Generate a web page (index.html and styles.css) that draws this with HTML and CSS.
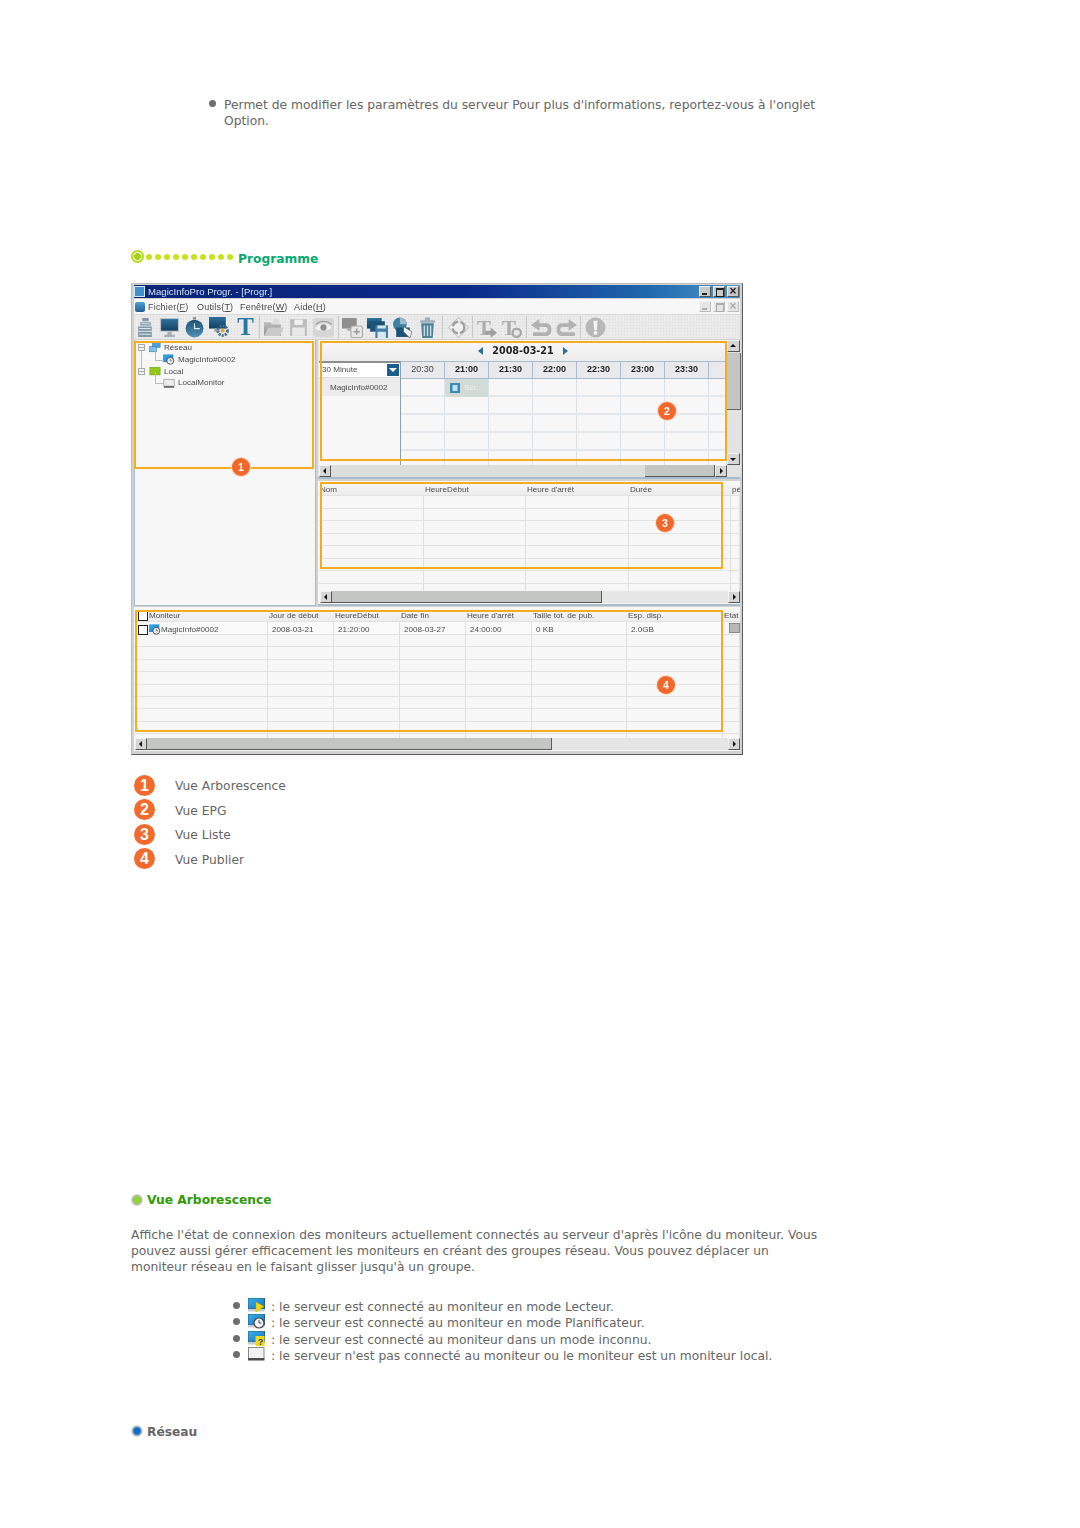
FILE: index.html
```html
<!DOCTYPE html>
<html lang="fr">
<head>
<meta charset="utf-8">
<title>Programme</title>
<link rel="stylesheet" href="styles.css">
</head>
<body>
<svg class="defs" width="0" height="0" aria-hidden="true">
  <defs>
    <linearGradient id="scr" x1="0" y1="0" x2="0" y2="1"><stop offset="0" stop-color="#2d6f9e"/><stop offset="1" stop-color="#14405f"/></linearGradient>
    <linearGradient id="gry" x1="0" y1="0" x2="0" y2="1"><stop offset="0" stop-color="#bdbdbd"/><stop offset="1" stop-color="#8d8d8d"/></linearGradient>
    <linearGradient id="sky" x1="0" y1="0" x2="1" y2="1"><stop offset="0" stop-color="#35b4ea"/><stop offset="1" stop-color="#1a6fc0"/></linearGradient>
    <linearGradient id="clk" x1="0" y1="0" x2="0" y2="1"><stop offset="0" stop-color="#1c4f72"/><stop offset="1" stop-color="#4f93b8"/></linearGradient>
    <symbol id="i-doc" viewBox="0 0 20 20"><path d="M7 1h6v3H7zM5 5h10v3H5zM3 9h13v4H3zM3 14h13v5H3z" fill="#7f99aa"/><path d="M6 6.500h8M4 11h11M4 16.500h11" stroke="#dde5ea"/></symbol>
    <symbol id="i-mon" viewBox="0 0 20 20"><rect x="1" y="1" width="18" height="13" fill="#b9c2c8"/><rect x="2" y="2" width="16" height="11" fill="url(#scr)"/><path d="M8 14h4v3H8zM5 17h10v2H5z" fill="#a4afb6"/></symbol>
    <symbol id="i-clk" viewBox="0 0 20 20"><circle cx="10" cy="11" r="8.500" fill="url(#clk)"/><path d="M8.500 0h3v2.500h-3z" fill="#8a97a0"/><path d="M10 6v5h5" stroke="#dfeaf0" stroke-width="1.100" fill="none"/></symbol>
    <symbol id="i-gear" viewBox="0 0 20 20"><rect x="0" y="0" width="16" height="11" fill="url(#scr)"/><path d="M5 11h5v3H5z" fill="#9aa5ad"/><circle cx="13" cy="13" r="4.600" fill="none" stroke="#3d6f8e" stroke-width="2.600" stroke-dasharray="2 1"/><circle cx="13" cy="13" r="2" fill="#e3a63c"/></symbol>
    <symbol id="i-fold" viewBox="0 0 20 20"><path d="M1 5h6l2 2h8v11H1z" fill="url(#gry)"/><path d="M5 10h15l-4 8H1z" fill="#cacaca"/><path d="M8 7l3-6 5 2-2 4z" fill="#dcdcdc"/></symbol>
    <symbol id="i-save" viewBox="0 0 20 20"><path d="M2 2h16v16H2z" fill="#bdbdbd"/><path d="M6 2.500h8v5H6z" fill="#f0f0f0"/><path d="M4 10h12v8H4z" fill="#e8e8e8"/></symbol>
    <symbol id="i-eye" viewBox="0 0 20 20"><rect x="0" y="1" width="20" height="18" rx="3" fill="#d6d6d6"/><path d="M2 11c3-6 12-6 16-1-4 4-12 4-16 1z" fill="#f4f4f4"/><circle cx="10" cy="10" r="3" fill="#8f8f8f"/><path d="M3 7c4-4 10-4 15 0" stroke="#9a9a9a" fill="none"/></symbol>
    <symbol id="i-add" viewBox="0 0 20 20"><rect x="0" y="1" width="14" height="10" fill="#8f8f8f"/><path d="M5 11h4v2H5z" fill="#aaa"/><rect x="8.500" y="8.500" width="11" height="11" rx="2" fill="#e6e6e6" stroke="#aaa"/><path d="M14 11v6M11 14h6" stroke="#999" stroke-width="1.400"/></symbol>
    <symbol id="i-msave" viewBox="0 0 20 20"><rect x="0" y="1" width="14" height="10" fill="url(#scr)"/><rect x="3" y="4" width="14" height="10" fill="#1d5379"/><rect x="8" y="8" width="12" height="12" fill="#3c7ea8"/><path d="M10 8h8v3h-8zM10 14h8v6h-8z" fill="#d8e6ee"/></symbol>
    <symbol id="i-pic" viewBox="0 0 20 20"><circle cx="7.500" cy="7" r="6.500" fill="#3f7f9f"/><path d="M7.500.5a6.500 6.500 0 0 1 6.500 6.500H7.500z" fill="#9bb9c9"/><rect x="4" y="10" width="13" height="9" fill="#1d5379"/><path d="M11 9l8 5-2 6-6-6z" fill="#f2f2f2" stroke="#555" stroke-width=".6"/></symbol>
    <symbol id="i-trash" viewBox="0 0 20 20"><path d="M4 6h12l-1 14H5z" fill="#4f7f98"/><path d="M7 8v10M10 8v10M13 8v10" stroke="#cfe0e8" stroke-width="1.300"/><path d="M3 3h14v2.500H3zM7.500 .5h5v3h-5z" fill="#9fb0ba"/></symbol>
    <symbol id="i-sync" viewBox="0 0 20 20"><path d="M10 .5l9.500 9.500-9.500 9.500L.5 10z" fill="#f0f0f0" stroke="#c4c4c4"/><circle cx="10" cy="10" r="5.500" fill="none" stroke="#a0a0a0" stroke-width="2.200" stroke-dasharray="7 2"/></symbol>
    <symbol id="i-tarr" viewBox="0 0 20 20"><text x="0" y="17" class="gly">T</text><path d="M8 13h5v-3l6 5-6 5v-3H8z" fill="#a0a0a0"/></symbol>
    <symbol id="i-tcir" viewBox="0 0 20 20"><text x="0" y="17" class="gly">T</text><circle cx="14" cy="15" r="4" fill="#e6e6e6" stroke="#a8a8a8" stroke-width="2.200"/></symbol>
    <symbol id="i-undo" viewBox="0 0 20 20"><path d="M8 2L0 7.500 8 13V9.500h6c2.500 0 2.500 5 0 5H2V18h13c6 0 6-12 0-12H8z" fill="#b2b2b2"/></symbol>
    <symbol id="i-redo" viewBox="0 0 20 20"><path d="M12 2l8 5.500L12 13V9.500H6c-2.500 0-2.500 5 0 5h12V18H5C-1 18-1 6 5 6h7z" fill="#b2b2b2"/></symbol>
    <symbol id="i-warn" viewBox="0 0 20 20"><circle cx="10" cy="10" r="9.500" fill="#b8b8b8"/><path d="M8 3.500h4l-.8 9H8.800z" fill="#f5f5f5"/><circle cx="10" cy="15.200" r="1.800" fill="#f5f5f5"/></symbol>
    <symbol id="i-s-play" viewBox="0 0 17 15"><rect x="0" y="0" width="16.500" height="11" fill="url(#sky)" stroke="#2a5f88"/><rect x="0" y="11" width="16.500" height="2.500" fill="#c8ced2"/><path d="M8 4l8 4.500L8 14z" fill="#f6d80e" stroke="#c9a900" stroke-width=".5"/></symbol>
    <symbol id="i-s-clock" viewBox="0 0 17 15"><rect x="0" y="0" width="16.500" height="11" fill="url(#sky)" stroke="#2a5f88"/><rect x="0" y="11" width="16.500" height="2.500" fill="#c8ced2"/><circle cx="11" cy="9" r="5" fill="#f4f4f4" stroke="#444" stroke-width="1.200"/><path d="M11 6v3h2.500" stroke="#444" fill="none"/></symbol>
    <symbol id="i-s-unk" viewBox="0 0 17 15"><rect x="0" y="0" width="16.500" height="11" fill="url(#sky)" stroke="#2a5f88"/><rect x="0" y="11" width="16.500" height="2.500" fill="#c8ced2"/><rect x="7.500" y="5" width="9" height="10" fill="#f6d80e"/><text x="9.700" y="14" class="q">?</text></symbol>
    <symbol id="i-s-off" viewBox="0 0 17 15"><rect x=".5" y=".5" width="15.500" height="11" fill="#f1f1f1" stroke="#8a8a8a"/><rect x="0" y="11" width="16.500" height="2.500" fill="#4d4d4d"/></symbol>
    <symbol id="i-net" viewBox="0 0 14 12"><rect x="4" y="0" width="9" height="6" fill="#4aa5df" stroke="#356d96" stroke-width=".6"/><rect x="0" y="5" width="9" height="6" fill="#7cc3ea" stroke="#356d96" stroke-width=".6"/></symbol>
    <symbol id="i-sched" viewBox="0 0 14 12"><rect x="0" y="0" width="12" height="9" fill="url(#sky)"/><circle cx="8.500" cy="7.500" r="4" fill="#eee" stroke="#444"/><path d="M8.500 5v2.500h2" stroke="#444" fill="none" stroke-width=".7"/></symbol>
    <symbol id="i-green" viewBox="0 0 14 12"><rect x="1" y="1" width="12" height="9" fill="#94c81a" stroke="#6f9a10" stroke-width=".6"/></symbol>
    <symbol id="i-local" viewBox="0 0 14 12"><rect x="1" y="1" width="12" height="8" fill="#ececec" stroke="#888" stroke-width=".7"/><rect x="1" y="9" width="12" height="2" fill="#666"/></symbol>
    <symbol id="i-film" viewBox="0 0 10 10"><rect width="10" height="10" fill="#3c8ab0"/><rect x="2.500" y="2" width="5" height="6" fill="#bfe6f5"/></symbol>
  </defs>
</svg>

<main class="page">
  <div class="note">
    <span class="dot"></span>
    <p class="note-text">Permet de modifier les paramètres du serveur Pour plus d'informations, reportez-vous à l'onglet Option.</p>
  </div>

  <h2 class="h-prog">
    <span class="ring"></span>
    <span class="beads"><i></i><i></i><i></i><i></i><i></i><i></i><i></i><i></i><i></i><i></i></span>
    <span class="h-text">Programme</span>
  </h2>

  <section class="win">
    <div class="tbar">
      <span class="appico"></span>
      <span class="ttl">MagicInfoPro Progr. - [Progr.]</span>
      <span class="wbtns"><b class="wb wb-min"></b><b class="wb wb-max"></b><b class="wb wb-x">×</b></span>
    </div>
    <div class="mbar">
      <span class="appico2"></span>
      <span class="m m1">Fichier(<u>F</u>)</span>
      <span class="m m2">Outils(<u>T</u>)</span>
      <span class="m m3">Fenêtre(<u>W</u>)</span>
      <span class="m m4">Aide(<u>H</u>)</span>
      <span class="wbtns wbtns-l"><b class="wb wb-min"></b><b class="wb wb-max"></b><b class="wb wb-x">×</b></span>
    </div>
    <div class="tools">
      <span class="tb tb-first"><svg class="ti"><use href="#i-doc"/></svg></span>
      <span class="tb"><svg class="ti"><use href="#i-mon"/></svg></span>
      <span class="tb"><svg class="ti"><use href="#i-clk"/></svg></span>
      <span class="tb"><svg class="ti"><use href="#i-gear"/></svg></span>
      <span class="tb tb-t">T</span>
      <span class="sep"></span>
      <span class="tb"><svg class="ti"><use href="#i-fold"/></svg></span>
      <span class="tb"><svg class="ti"><use href="#i-save"/></svg></span>
      <span class="tb"><svg class="ti"><use href="#i-eye"/></svg></span>
      <span class="sep"></span>
      <span class="tb"><svg class="ti"><use href="#i-add"/></svg></span>
      <span class="tb"><svg class="ti"><use href="#i-msave"/></svg></span>
      <span class="tb"><svg class="ti"><use href="#i-pic"/></svg></span>
      <span class="tb"><svg class="ti"><use href="#i-trash"/></svg></span>
      <span class="sep sep-w"></span>
      <span class="tb"><svg class="ti"><use href="#i-sync"/></svg></span>
      <span class="sep"></span>
      <span class="tb"><svg class="ti"><use href="#i-tarr"/></svg></span>
      <span class="tb"><svg class="ti"><use href="#i-tcir"/></svg></span>
      <span class="sep"></span>
      <span class="tb"><svg class="ti"><use href="#i-undo"/></svg></span>
      <span class="tb"><svg class="ti"><use href="#i-redo"/></svg></span>
      <span class="sep"></span>
      <span class="tb"><svg class="ti"><use href="#i-warn"/></svg></span>
    </div>

    <div class="upper">
      <div class="tree">
        <div class="node"><span class="exp"></span><svg class="nico"><use href="#i-net"/></svg><span>Réseau</span></div>
        <div class="node node-c node-branch"><svg class="nico"><use href="#i-sched"/></svg><span>MagicInfo#0002</span></div>
        <div class="node"><span class="exp"></span><svg class="nico"><use href="#i-green"/></svg><span>Local</span></div>
        <div class="node node-c"><svg class="nico"><use href="#i-local"/></svg><span>LocalMonitor</span></div>
      </div>

      <div class="right">
        <div class="epg">
          <div class="epg-main">
            <div class="datebar"><i class="tri tri-l"></i><span>2008-03-21</span><i class="tri tri-r"></i></div>
            <div class="epg-grid">
              <div class="labels">
                <div class="select"><span>30 Minute</span><b class="dd"></b></div>
                <div class="lab">MagicInfo#0002</div>
              </div>
              <div class="slots">
                <div class="slothead">
                  <span class="st-reg">20:30</span><span>21:00</span><span>21:30</span><span>22:00</span><span>22:30</span><span>23:00</span><span>23:30</span><span></span>
                </div>
                <div class="srow"><i></i><i class="cell-scr"><svg class="film"><use href="#i-film"/></svg>Scr...</i><i></i><i></i><i></i><i></i><i></i><i></i></div>
                <div class="srow"><i></i><i></i><i></i><i></i><i></i><i></i><i></i><i></i></div>
                <div class="srow"><i></i><i></i><i></i><i></i><i></i><i></i><i></i><i></i></div>
                <div class="srow"><i></i><i></i><i></i><i></i><i></i><i></i><i></i><i></i></div>
                <div class="srow"><i></i><i></i><i></i><i></i><i></i><i></i><i></i><i></i></div>
              </div>
            </div>
          </div>
          <div class="vs"><b class="sbtn up"></b><b class="vthumb"></b><span class="fill"></span><b class="sbtn dn"></b></div>
          <div class="hs"><b class="sbtn lf"></b><span class="hs-track1"></span><b class="thumb thumb-epg"></b><b class="sbtn rt"></b></div>
          <span class="corner"></span>
        </div>

        <div class="list">
          <div class="lrow lhead"><span>Nom</span><span>HeureDébut</span><span>Heure d'arrêt</span><span>Durée</span><span>pé</span></div>
          <div class="lbody">
            <div class="lrow"><i></i><i></i><i></i><i></i><i></i></div>
            <div class="lrow"><i></i><i></i><i></i><i></i><i></i></div>
            <div class="lrow"><i></i><i></i><i></i><i></i><i></i></div>
            <div class="lrow"><i></i><i></i><i></i><i></i><i></i></div>
            <div class="lrow"><i></i><i></i><i></i><i></i><i></i></div>
            <div class="lrow"><i></i><i></i><i></i><i></i><i></i></div>
            <div class="lrow"><i></i><i></i><i></i><i></i><i></i></div>
            <div class="lrow"><i></i><i></i><i></i><i></i><i></i></div>
          </div>
          <div class="hs hs-flat"><b class="sbtn lf"></b><b class="thumb thumb-list"></b><span class="fill"></span><b class="sbtn rt"></b></div>
        </div>
      </div>
    </div>

    <div class="pub">
      <div class="prow phead"><span class="first"><b class="chk"></b>Moniteur</span><span>Jour de début</span><span>HeureDébut</span><span>Date fin</span><span>Heure d'arrêt</span><span>Taille tot. de pub.</span><span>Esp. disp.</span><span>Etat</span></div>
      <div class="pbody">
        <div class="prow pdata"><span class="first"><b class="chk"></b><svg class="nico nico-p"><use href="#i-sched"/></svg>MagicInfo#0002</span><span>2008-03-21</span><span>21:20:00</span><span>2008-03-27</span><span>24:00:00</span><span>0 KB</span><span>2.0GB</span><span><b class="etat"></b></span></div>
        <div class="prow"><i></i><i></i><i></i><i></i><i></i><i></i><i></i><i></i></div>
        <div class="prow"><i></i><i></i><i></i><i></i><i></i><i></i><i></i><i></i></div>
        <div class="prow"><i></i><i></i><i></i><i></i><i></i><i></i><i></i><i></i></div>
        <div class="prow"><i></i><i></i><i></i><i></i><i></i><i></i><i></i><i></i></div>
        <div class="prow"><i></i><i></i><i></i><i></i><i></i><i></i><i></i><i></i></div>
        <div class="prow"><i></i><i></i><i></i><i></i><i></i><i></i><i></i><i></i></div>
        <div class="prow"><i></i><i></i><i></i><i></i><i></i><i></i><i></i><i></i></div>
        <div class="prow"><i></i><i></i><i></i><i></i><i></i><i></i><i></i><i></i></div>
        <div class="prow"><i></i><i></i><i></i><i></i><i></i><i></i><i></i><i></i></div>
      </div>
      <div class="hs hs-flat"><b class="sbtn lf"></b><b class="thumb thumb-pub"></b><span class="fill"></span><b class="sbtn rt"></b></div>
    </div>

    <span class="hl hl1"></span><span class="hl hl2"></span><span class="hl hl3"></span><span class="hl hl4"></span>
    <span class="pin pin1">1</span><span class="pin pin2">2</span><span class="pin pin3">3</span><span class="pin pin4">4</span>
  </section>

  <ul class="legend">
    <li><span class="num">1</span>Vue Arborescence</li>
    <li><span class="num">2</span>Vue EPG</li>
    <li><span class="num">3</span>Vue Liste</li>
    <li><span class="num">4</span>Vue Publier</li>
  </ul>

  <h3 class="h-sub h-green"><span class="orb orb-green"></span>Vue Arborescence</h3>
  <p class="para">Affiche l'état de connexion des moniteurs actuellement connectés au serveur d'après l'icône du moniteur. Vous pouvez aussi gérer efficacement les moniteurs en créant des groupes réseau. Vous pouvez déplacer un moniteur réseau en le faisant glisser jusqu'à un groupe.</p>

  <ul class="status">
    <li><span class="dot"></span><svg class="sico"><use href="#i-s-play"/></svg>: le serveur est connecté au moniteur en mode Lecteur.</li>
    <li><span class="dot"></span><svg class="sico"><use href="#i-s-clock"/></svg>: le serveur est connecté au moniteur en mode Planificateur.</li>
    <li><span class="dot"></span><svg class="sico"><use href="#i-s-unk"/></svg>: le serveur est connecté au moniteur dans un mode inconnu.</li>
    <li><span class="dot"></span><svg class="sico"><use href="#i-s-off"/></svg>: le serveur n'est pas connecté au moniteur ou le moniteur est un moniteur local.</li>
  </ul>

  <h3 class="h-sub h-grey"><span class="orb orb-blue"></span>Réseau</h3>
</main>
</body>
</html>
```
FILE: styles.css
```css
* { box-sizing: border-box; }
html, body { margin: 0; padding: 0; background: #fff; }
body { font-family: "DejaVu Sans", Verdana, sans-serif; font-size: 12.3px; line-height: 16px; color: #666; }
.defs { position: absolute; }
.gly { font: bold 20px "Liberation Serif", serif; fill: #adadad; }
.q { font: bold 9px "Liberation Sans", sans-serif; fill: #1b3fa8; }
.page { width: 700px; margin-left: 131px; padding-top: 97px; }

.dot { flex: none; width: 7px; height: 7px; border-radius: 50%; background: #6e6e6e; margin-top: 3px; }
.note { display: flex; gap: 8px; margin-left: 78px; }
.note-text { margin: 0; width: 600px; }

.h-prog { display: flex; align-items: center; height: 16px; margin: 121px 0 0; font-size: 12.25px; font-weight: bold; color: #0aa871; }
.h-text { padding-top: 2px; }
.ring { width: 13px; height: 13px; border-radius: 50%; border: 2px solid #b5dc1a; background: radial-gradient(circle, #a5d21a 0 3.2px, #fff 3.8px); margin: -3px 2px 0 0; }
.beads { display: flex; gap: 3px; margin: -3px 5px 0 0; }
.beads i { width: 6px; height: 6px; border-radius: 50%; background: #c6e31c; }

/* application window */
.win { position: relative; width: 612px; height: 472px; margin-top: 17px; padding: 1px 2px; background: #d2d2d2; border: 1px solid #bdbdbd; border-right-color: #5d5d5d; border-bottom-color: #5d5d5d; font-family: "Liberation Sans", sans-serif; font-size: 8.1px; line-height: 12px; color: #4b4b4b; filter: blur(.35px); }
.tbar { display: flex; align-items: center; height: 13px; background: linear-gradient(90deg, #0b2476 0, #0a2a8a 55%, #1f68ad 85%, #4e97c9 100%); color: #cfe2f5; font-size: 9.6px; }
.appico { width: 11px; height: 11px; margin: 0 3px 0 0; background: #3f90c8; border: 1px solid #cfe7f5; }
.wbtns { display: flex; gap: 2px; margin-left: auto; margin-right: 1px; }
.wb { display: flex; justify-content: center; width: 12px; height: 11px; background: #c9c9c9; border: 1px solid #eee; border-right-color: #555; border-bottom-color: #555; color: #222; font-size: 12px; line-height: 8px; position: relative; }
.wb-min::after { content: ""; position: absolute; left: 2px; bottom: 1px; width: 5px; height: 2px; background: #222; }
.wb-max::after { content: ""; position: absolute; left: 2px; top: 1px; width: 6px; height: 6px; border: 1px solid #222; border-top-width: 2px; }
.mbar { position: relative; display: flex; align-items: center; height: 16px; margin-top: 1px; background: #f7f7f7; border-bottom: 1px solid #d8d8d8; font-size: 9px; }
.appico2 { width: 10px; height: 10px; margin-left: 1px; background: linear-gradient(#4fa0d6, #1f5f90); border-radius: 2px; }
.m { position: absolute; letter-spacing: .2px; }
.m1 { left: 14px; } .m2 { left: 63px; } .m3 { left: 106px; } .m4 { left: 160px; }
.wbtns-l { opacity: .35; }
.tools { display: flex; align-items: center; height: 25px; background-color: #ebebeb; background-image: radial-gradient(#dcdcdc 0.7px, transparent 0.8px); background-size: 3px 3px; border-bottom: 1px solid #cfcfcf; }
.tb { flex: none; display: flex; align-items: center; justify-content: center; width: 25px; }
.tb-first { width: 23px; }
.tb-t { font: bold 25px/22px "Liberation Serif", serif; color: #2878a4; margin-left: 2px; width: 23px; }
.ti { width: 21px; height: 21px; }
.sep { flex: none; width: 4px; height: 22px; background: linear-gradient(#c9c9c9, #c9c9c9) center / 1px 100% no-repeat; }
.sep-w { width: 5.5px; }

.upper { display: grid; grid-template-columns: 182px 422px; grid-template-rows: 266px; column-gap: 2px; height: 266px; }
.tree { padding: 2px 0 0 3px; background: #f7f7f7; border: 1px solid #a9bccd; border-top: 0; }
.node { position: relative; display: flex; align-items: center; height: 11.8px; white-space: nowrap; }
.exp { position: relative; z-index: 1; flex: none; width: 7px; height: 7px; margin-right: 4px; border: 1px solid #aaa; background: linear-gradient(#aaa, #aaa) center / 5px 1px no-repeat, #f2f2f2; }
.nico { flex: none; width: 12px; height: 11px; margin-right: 3px; }
.node-c { padding-left: 25px; }
.node-c::before { content: ""; position: absolute; left: 17px; top: -5px; height: 11px; width: 8px; border-left: 1px solid #bbb; border-bottom: 1px solid #bbb; }
.node-branch::after { content: ""; position: absolute; left: 3px; top: -3px; height: 18px; border-left: 1px solid #bbb; }

.right { display: flex; flex-direction: column; gap: 2px; min-height: 0; }
.epg { display: grid; grid-template-columns: 408px 14px; grid-template-rows: 125px 12px; height: 139px; background: #e8e8e8; border-bottom: 2px solid #a9bccd; padding-left: 1px; }
.epg-main { background: #f7f7f7; overflow: hidden; }
.datebar { display: flex; align-items: center; justify-content: center; gap: 8px; height: 21px; background: linear-gradient(#f8f8f8, #ececec); font: bold 9.6px/12px "DejaVu Sans", sans-serif; color: #222; }
.tri { width: 0; height: 0; border: 4px solid transparent; }
.tri-l { border-right: 5px solid #2a6f9f; border-left: 0; margin-right: 1px; }
.tri-r { border-left: 5px solid #2a6f9f; border-right: 0; margin-left: 1px; }
.epg-grid { display: grid; grid-template-columns: 82px 326px; height: 104px; }
.labels { border-right: 1px solid #8aa0b4; }
.select { display: flex; align-items: center; justify-content: space-between; height: 17px; padding-left: 3px; background: #fff; border-top: 2px solid #8e8e8e; border-bottom: 1px solid #ddd; }
.dd { position: relative; width: 12px; height: 12px; margin-right: 1px; background: #1c5f8d; }
.dd::after { content: ""; position: absolute; left: 2px; top: 4px; border: 4px solid transparent; border-top: 4px solid #fff; border-bottom: 0; }
.lab { height: 18px; line-height: 20px; padding-left: 11px; background: #ececec; }
.slothead, .srow { display: grid; grid-template-columns: repeat(7, 44px) 18px; }
.slothead { height: 18px; background: #eaeaec; border-top: 1px solid #a9bccd; border-bottom: 1px solid #a9bccd; font: bold 9px/14px "Liberation Sans", sans-serif; color: #222; text-align: center; }
.slothead span { border-right: 1px solid #a9bccd; }
.slothead .st-reg { font-weight: normal; color: #444; }
.srow { height: 18px; border-bottom: 2px solid #e4e9ee; }
.srow i { display: block; border-right: 1px solid #d9e2ea; font-style: normal; }
.cell-scr { display: flex !important; align-items: center; gap: 4px; padding-left: 5px; margin-bottom: -2px; background: #d3dbd7; color: #eef2f0; }
.film { width: 10px; height: 10px; }

.vs { display: flex; flex-direction: column; background: #e2e2e2; }
.fill { flex: 1; }
.vthumb { height: 57px; background: #c4c6c4; border-right: 1px solid #666; border-bottom: 1px solid #666; margin-top: 1px; }
.hs { display: flex; background: #dcdedc; height: 12px; }
.hs-track1 { width: 314px; }
.corner { background: #e2e2e2; }
.sbtn { position: relative; flex: none; display: block; width: 12px; height: 12px; background: #d6d6d6; border: 1px solid #f2f2f2; border-right-color: #555; border-bottom-color: #555; }
.sbtn::after { content: ""; position: absolute; left: 2px; top: 2px; border: 3px solid transparent; }
.lf::after { border-right-color: #111; border-left: 0; left: 3px; }
.rt::after { border-left-color: #111; border-right: 0; left: 4px; }
.up::after { border-bottom-color: #111; border-top: 0; top: 3px; }
.dn::after { border-top-color: #111; border-bottom: 0; top: 4px; }
.vs .sbtn { width: 13px; height: 12px; }
.thumb { display: block; height: 12px; background: #c4c6c4; border-right: 1px solid #5a5a5a; border-bottom: 1px solid #5a5a5a; }
.thumb-epg { width: 70px; }
.thumb-list { width: 270px; }
.thumb-pub { width: 405px; }

.list { display: flex; flex-direction: column; flex: 1; min-height: 0; background: #f7f7f7; padding: 1px 0 1px 1px; border-bottom: 2px solid #a9bccd; }
.lrow { display: grid; grid-template-columns: 105px 102px 103px 102px 9px; flex: none; height: 12.5px; border-bottom: 1px solid #e2e2e2; }
.lrow i, .prow i { display: block; border-right: 1px solid #e0e0e0; }
.lhead { height: 14px; background: linear-gradient(#f8f8f8, #ececec); line-height: 13px; }
.lhead span { padding: 1px 0 0 1px; white-space: nowrap; overflow: hidden; }
.lbody { flex: 1; min-height: 0; overflow: hidden; }
.hs-flat { flex: none; margin-left: 1px; background: #e6e6e6; }

.pub { display: flex; flex-direction: column; height: 144px; margin-top: 1px; padding: 1px 0; background: #f7f7f7; }
.prow { display: grid; grid-template-columns: 134px 66px 66px 66px 66px 95px 96px 17px; flex: none; height: 12.4px; border-bottom: 1px solid #e2e2e2; white-space: nowrap; }
.phead { height: 14px; background: linear-gradient(#f8f8f8, #ececec); line-height: 15px; }
.phead span { padding-left: 1px; }
.first { display: flex; align-items: center; padding-left: 4px !important; }
.chk { flex: none; width: 10px; height: 10px; margin-right: 1px; background: #fff; border: 1.5px solid #222; }
.pdata { height: 13px; line-height: 15px; background: #f9f9f9; }
.pdata span { padding-left: 4px; border-right: 1px solid #e0e0e0; }
.nico-p { margin: 0; }
.etat { display: block; width: 11px; height: 10px; margin: 1px 0 0 2px; background: #b9b9b9; border: 1px solid #8a8a8a; }
.pbody { flex: 1; min-height: 0; overflow: hidden; }

.hl { position: absolute; border: 2px solid #f5ac1e; pointer-events: none; }
.hl1 { left: 2px; top: 57px; width: 180px; height: 128px; }
.hl2 { left: 188px; top: 57px; width: 407px; height: 120px; }
.hl3 { left: 188px; top: 198px; width: 403px; height: 87px; }
.hl4 { left: 3px; top: 326px; width: 588px; height: 122px; }
.pin { position: absolute; width: 18px; height: 18px; border-radius: 50%; background: #f2682a; box-shadow: 0 0 0 1px #fbd9c8; color: #fff; font: bold 10.500px/18px "Liberation Sans", sans-serif; text-align: center; }
.pin1 { left: 100px; top: 174px; }
.pin2 { left: 526px; top: 118px; }
.pin3 { left: 524px; top: 230px; }
.pin4 { left: 525px; top: 392px; }

.legend { list-style: none; margin: 18px 0 0; padding: 0 0 0 3px; }
.legend li { display: flex; align-items: center; height: 24.5px; padding-top: 2px; }
.num { flex: none; width: 21px; height: 21px; margin: -2px 20px 0 0; border-radius: 50%; background: #f26a2c; color: #fff; font: bold 16px/21px "Liberation Sans", sans-serif; text-align: center; }

.h-sub { display: flex; align-items: center; gap: 4px; height: 16px; margin: 0; font-size: 12.25px; font-weight: bold; }
.h-green { margin-top: 321px; color: #2f9a06; }
.h-grey { margin-top: 59px; color: #666; }
.orb { width: 12px; height: 12px; border-radius: 50%; margin-top: -1px; }
.orb-green { background: radial-gradient(circle, #8fd62a 0 3px, #b5b5b5 4.5px, #e4e4e4 6px); }
.orb-blue { background: radial-gradient(circle, #0f6fc4 0 3px, #a9b4bd 4.5px, #e4e4e4 6px); }
.para { width: 690px; margin: 19px 0 0; line-height: 16.2px; }
.status { list-style: none; margin: 23px 0 0; padding: 0 0 0 102px; }
.status li { display: flex; height: 16.5px; white-space: nowrap; line-height: 16.5px; }
.sico { flex: none; width: 17px; height: 15px; margin: -1px 6px 0 8px; }
```
